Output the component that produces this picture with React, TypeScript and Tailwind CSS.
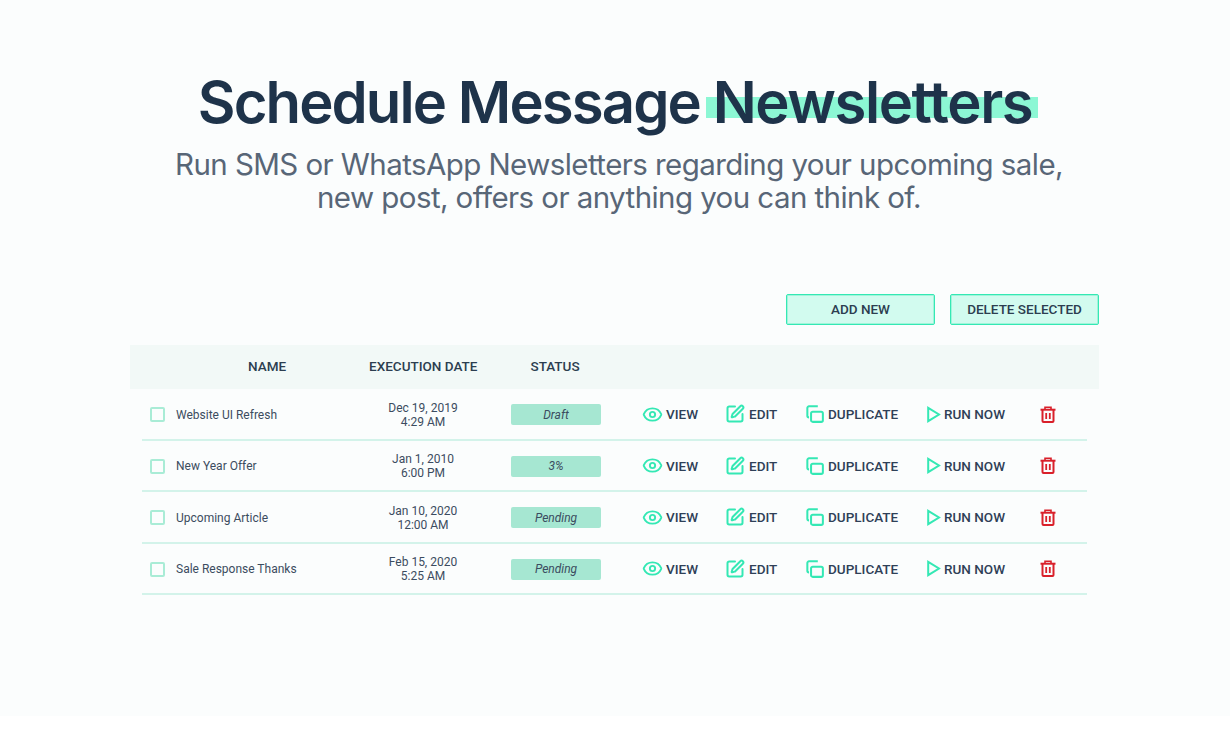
import { Eye, SquarePen } from "lucide-react";

const jobs = [
  { name: "Website UI Refresh", day: "Dec 19, 2019", time: "4:29 AM", status: "Draft" },
  { name: "New Year Offer", day: "Jan 1, 2010", time: "6:00 PM", status: "3%" },
  { name: "Upcoming Article", day: "Jan 10, 2020", time: "12:00 AM", status: "Pending" },
  { name: "Sale Response Thanks", day: "Feb 15, 2020", time: "5:25 AM", status: "Pending" },
];

function PlayOutline() {
  return (
    <svg width="14" height="17" viewBox="0 0 14 17" fill="none" stroke="#34e8b4" strokeWidth="2">
      <polygon points="1.2,1.8 12,8.5 1.2,15.2" strokeLinejoin="miter" />
    </svg>
  );
}

function CopyOutline() {
  return (
    <svg width="18" height="18" viewBox="0 0 16 16" fill="none" stroke="#34e8b4" strokeWidth="1.8">
      <rect x="4.5" y="6" width="10.5" height="9" rx="1.5" />
      <path d="M10.5 1.2H2.7A1.5 1.5 0 0 0 1.2 2.7V9.5A1.5 1.5 0 0 0 2.7 11" />
    </svg>
  );
}

function TrashOutline() {
  return (
    <svg width="16" height="17" viewBox="0 0 16 17" fill="none" stroke="#d9202a" strokeWidth="2">
      <path d="M5 3V1.2h6V3" strokeWidth="1.6" />
      <path d="M0.5 3.7H15.5" />
      <path d="M2.5 4V15a1 1 0 0 0 1 1h9a1 1 0 0 0 1-1V4" />
      <path d="M6.2 7V13M9.8 7V13" strokeWidth="1.8" />
    </svg>
  );
}

function JobRow({ name, day, time, status }: (typeof jobs)[number]) {
  return (
    <div className="mx-3 flex h-[51.5px] items-center border-b-2 border-[#d3f3ea] pl-2 pt-[2px]">
      <span className="h-[15px] w-[15px] shrink-0 rounded-[2px] border-2 border-[#a9ecd6]" />
      <span className="ml-[11px] w-[172px] shrink-0 text-[12px] text-[#3b4c60]">{name}</span>
      <div className="w-[150px] shrink-0 text-center text-[12px] leading-[14px] text-[#3b4c60]">
        {day}
        <br />
        {time}
      </div>
      <span className="ml-[13px] flex h-[21px] w-[90px] shrink-0 items-center justify-center rounded-[2px] bg-[#a6e7d2] text-[12px] italic text-[#3b4c60]">
        {status}
      </span>
      <div className="-mt-px ml-[41px] flex items-center text-[13.5px] font-medium text-[#2f4057]">
        <Eye size={21} color="#34e8b4" strokeWidth={2.2} />
        <span className="ml-[3px] w-[58.5px]">VIEW</span>
        <SquarePen size={20} color="#34e8b4" strokeWidth={2.4} />
        <span className="ml-[4.5px] w-[57px]">EDIT</span>
        <CopyOutline />
        <span className="ml-[4px] w-[99px]">DUPLICATE</span>
        <PlayOutline />
        <span className="ml-[3px] w-[95.5px]">RUN NOW</span>
        <TrashOutline />
      </div>
    </div>
  );
}

const buttonClass =
  "h-[31px] w-[149px] rounded-[2px] border border-[#34e8b4] bg-[#d2fbef] text-[13.5px] font-medium text-[#2c3e50] shadow-[inset_0_0_0_1px_#a0f5da]";

export default function App() {
  return (
    <div className="h-[716px] bg-[#fbfdfd] pt-[68px] font-['Roboto',sans-serif]">
      <header className="text-center font-['Inter',sans-serif]">
        <h1 className="text-[58px] font-semibold leading-[68px] text-[#1e334a]">
          <span className="tracking-[-1.9px]">Schedule Message </span>
          <span className="relative inline-block tracking-[-1.43px]">
            <span className="absolute -left-[7px] -right-[6px] top-[29px] h-[21px] bg-[#8cf7d4]" />
            <span className="relative">Newsletters</span>
          </span>
        </h1>
        <p className="mt-[12px] pl-2 text-[29.5px] leading-[33px] tracking-[-0.57px] text-[#586677]">
          Run SMS or WhatsApp Newsletters regarding your upcoming sale,
          <br />
          new post, offers or anything you can think of.
        </p>
      </header>

      <main className="mx-[130px] mt-[80px] w-[969px]">
        <div className="flex justify-end gap-[15px]">
          <button className={buttonClass}>ADD NEW</button>
          <button className={buttonClass}>DELETE SELECTED</button>
        </div>

        <div className="mt-[20px] flex h-[44px] items-center bg-[#f2f9f7] pb-px text-[13.5px] font-medium text-[#2c3e50]">
          <span className="ml-[118px]">NAME</span>
          <span className="ml-[83px]">EXECUTION DATE</span>
          <span className="ml-[53px]">STATUS</span>
        </div>

        {jobs.map(job => (
          <JobRow key={job.name} {...job} />
        ))}
      </main>
    </div>
  );
}
